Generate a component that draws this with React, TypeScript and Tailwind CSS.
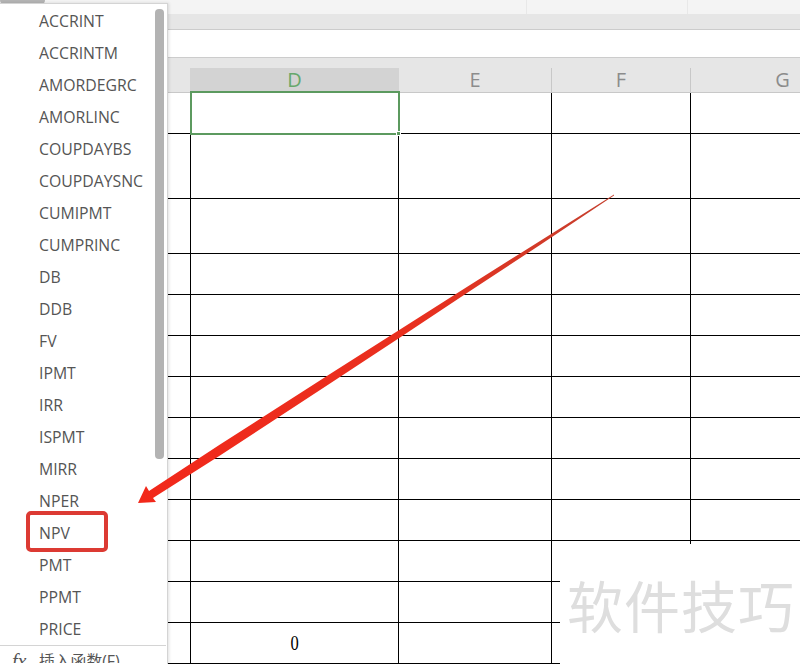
const items = ["ACCRINT","ACCRINTM","AMORDEGRC","AMORLINC","COUPDAYBS","COUPDAYSNC","CUMIPMT","CUMPRINC","DB","DDB","FV","IPMT","IRR","ISPMT","MIRR","NPER","NPV","PMT","PPMT","PRICE"];
const fullRows = [41, 65, 55, 41, 41, 41, 41, 41, 41, 41];
const stubRows = [41, 41, 41];

function FullRow({ h }: { h: number }) {
  return (
    <div className="flex" style={{ height: h }}>
      <div className="w-[191px] shrink-0 border-r border-b border-black" />
      <div className="w-[208px] shrink-0 border-r border-b border-black" />
      <div className="w-[153px] shrink-0 border-r border-b border-black" />
      <div className="w-[139px] shrink-0 border-r border-b border-black" />
      <div className="flex-1 border-b border-black" />
    </div>
  );
}

function StubRow({ h, zero }: { h: number; zero?: boolean }) {
  return (
    <div className="flex" style={{ height: h }}>
      <div className="w-[191px] shrink-0 border-r border-b border-black" />
      <div className="w-[208px] shrink-0 border-r border-b border-black flex items-center justify-center text-[22px] leading-none text-black font-['Liberation_Serif',serif]">
        {zero ? <span className="inline-block scale-x-75">0</span> : null}
      </div>
      <div className="w-[153px] shrink-0 border-r border-b border-black" />
      <div className="w-[8px] shrink-0 border-b border-black" />
    </div>
  );
}

function ColHead({ w, label, active, line }: { w: string; label: string; active?: boolean; line?: boolean }) {
  return (
    <div className={`${w} shrink-0 h-full flex flex-col justify-end`}>
      <div className={`h-[24px] flex items-center justify-center text-[20px] leading-none ${active ? "bg-[#d3d3d3] text-[#66a86b]" : "text-[#8c8c8c]"} ${line ? "border-r border-[#c8c8c8]" : ""}`}>
        {label}
      </div>
    </div>
  );
}

export default function App() {
  return (
    <div className="relative w-[800px] h-[664px] overflow-hidden bg-white font-['Open_Sans','Noto_Sans_CJK_SC',sans-serif]">
      {/* window chrome */}
      <div className="h-[14px] bg-[#f4f4f4] flex">
        <div className="w-[527px] shrink-0 border-r border-[#e8e8e8]" />
        <div className="w-[161px] shrink-0 border-r border-[#e8e8e8]" />
      </div>
      <div className="h-[16px] bg-[#e6e6e6] border-b border-[#cccccc]" />
      <div className="h-[27px] bg-white" />
      <div className="h-[36px] bg-[#e6e6e6] border-y border-[#c8c8c8] border-t-[#cccccc] flex">
        <div className="w-[190px] shrink-0" />
        <ColHead w="w-[209px]" label="D" active />
        <ColHead w="w-[153px]" label="E" line />
        <ColHead w="w-[139px]" label="F" line />
        <ColHead w="w-[183px]" label="G" />
      </div>

      {/* sheet */}
      <div>
        {fullRows.map((h, i) => <FullRow key={i} h={h} />)}
        {stubRows.map((h, i) => <StubRow key={i} h={h} zero={i === 2} />)}
      </div>

      {/* column F tail below the last full row */}
      <div className="absolute left-[690px] top-[541px] w-px h-[3px] bg-black" />

      {/* selected cell */}
      <div className="absolute left-[190px] top-[91px] w-[210px] h-[44px] border-2 border-[#5c9a5f]" />
      <div className="absolute left-[396px] top-[131px] w-[5px] h-[5px] bg-[#5c9a5f] border border-white" />

      {/* watermark */}
      <div className="absolute left-[567px] top-[566px] text-[56px] leading-[76px] tracking-[1px] text-[#dedede] whitespace-nowrap font-['Noto_Sans_CJK_SC',sans-serif]">
        软件技巧
      </div>

      {/* dropdown menu */}
      <div className="absolute left-0 top-0 w-[45px] h-[4px] rounded-b-[4px] bg-[#b4b4b4]" />
      <div className="absolute left-0 top-[3px] bottom-0 w-[168px] bg-white border-t border-r border-[#d4d4d4] shadow-[1px_0_3px_rgba(0,0,0,0.12)] flex flex-col">
        <div className="pt-[1px]">
          {items.map((t) => (
            <div key={t} className="h-[32px] pl-[39px] pt-[2px] flex items-center text-[15.8px] text-[#555555]">{t}</div>
          ))}
        </div>
        <div className="border-t border-[#d4d4d4] mr-[1px] h-[18px] flex items-start overflow-hidden pl-[12px] pt-[5px] text-[15.8px] text-[#555555]">
          <span className="w-[27px] text-[20px] italic font-['Liberation_Serif',serif] leading-none">fx</span>
          <span className="leading-[20px]">插入函数(F)</span>
        </div>
        <div className="absolute left-[155px] top-[5px] w-[9px] h-[450px] rounded-[4px] bg-[#b3b3b3]" />
      </div>

      {/* red highlight around NPV */}
      <div className="absolute left-[26px] top-[511px] w-[82px] h-[41px] rounded-[5px] border-4 border-[#dc3a33]" />

      {/* arrow annotation */}
      <svg className="absolute left-0 top-0 pointer-events-none" width="800" height="664" viewBox="0 0 800 664">
        <defs>
          <linearGradient id="arrowFill" gradientUnits="userSpaceOnUse" x1="138" y1="503" x2="614" y2="195">
            <stop offset="0" stopColor="#f2281a" />
            <stop offset="0.6" stopColor="#e8301f" />
            <stop offset="1" stopColor="#c4402e" />
          </linearGradient>
        </defs>
        <polygon points="138,503 146,486 149,491 220,444.5 330,374 400,329.5 470,285 540,241 614,194.5 614,195.5 540,245 470,291 400,337.5 330,383.5 220,455.5 153,498 156,502" fill="url(#arrowFill)" />
      </svg>
    </div>
  );
}
